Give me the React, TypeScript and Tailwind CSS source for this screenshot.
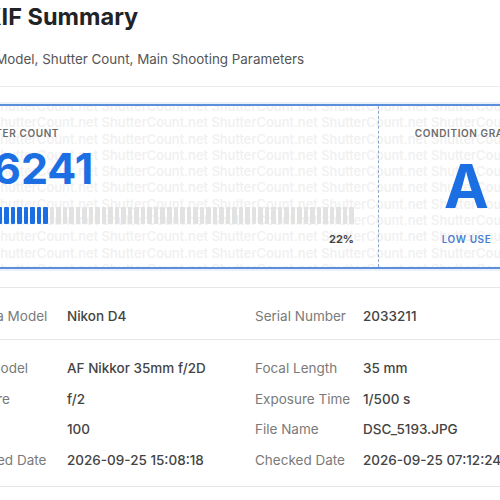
import React from "react";

const rows = [
  { label: "Lens Model", value: "AF Nikkor 35mm f/2D" },
  { label: "Focal Length", value: "35 mm" },
  { label: "Aperture", value: "f/2" },
  { label: "Exposure Time", value: "1/500 s" },
  { label: "ISO", value: "100" },
  { label: "File Name", value: "DSC_5193.JPG" },
  { label: "Captured Date", value: "2026-09-25 15:08:18" },
  { label: "Checked Date", value: "2026-09-25 07:12:24" },
];

function Watermark() {
  const line = Array.from({ length: 8 }, () => "ShutterCount.net").join(" ");
  return (
    <div className="pointer-events-none absolute inset-0 overflow-hidden select-none">
      <div className="-mt-[8px] flex flex-col">
        {Array.from({ length: 12 }).map((_, i) => (
          <div
            key={i}
            className="-ml-[62px] whitespace-nowrap text-[13px] leading-[16.3px] font-medium text-[#f0f0f0]"
          >
            {line}
          </div>
        ))}
      </div>
    </div>
  );
}

function Segments() {
  const total = 60;
  const filled = Math.round(total * 0.22);
  return (
    <div className="flex h-[17px] gap-[2px]">
      {Array.from({ length: total }).map((_, i) => (
        <div
          key={i}
          className={
            "flex-1 rounded-[1px] " + (i < filled ? "bg-[#1b6fe3]" : "bg-[#e2e2e2]")
          }
        />
      ))}
    </div>
  );
}

function Row({ label, value, left }: { label: string; value: string; left: boolean }) {
  return (
    <div className="flex text-[13.5px] leading-5">
      <div className={(left ? "w-[113px]" : "w-[108px]") + " shrink-0 text-[#7a7a7a]"}>{label}</div>
      <div className="font-medium text-[#444]">{value}</div>
    </div>
  );
}

export default function App() {
  return (
    <div
      className="h-[500px] w-[500px] overflow-hidden bg-white"
      style={{ fontFamily: "Inter, 'Noto Sans', sans-serif" }}
    >
      <div className="-ml-[58px] w-[614px] pt-px">
        <div className="flex items-center gap-2">
          <svg width="20" height="20" viewBox="0 0 24 24" fill="none" stroke="#1b6fe3" strokeWidth="2">
            <rect x="3" y="6" width="18" height="14" rx="2" />
            <circle cx="12" cy="13" r="4" />
          </svg>
          <h1 className="text-[23.5px] leading-8 font-bold text-[#222326]">EXIF Summary</h1>
        </div>
        <p className="mt-4 text-[13.4px] leading-5 text-[#555]">
          Camera Model, Shutter Count, Main Shooting Parameters
        </p>
        <div className="mt-[17px] h-px bg-[#ebebeb]" />

        <div className="relative mt-[17px] flex overflow-hidden rounded-lg border-2 border-[#5b8fd9] bg-white shadow-[0_0_0_2px_rgba(91,143,217,0.12)]">
          <Watermark />
          <div className="relative w-[434px] pl-[21px] pr-6 pt-[19px] pb-[20px]">
            <div className="text-[10px] leading-4 font-semibold tracking-[0.06em] text-[#6b6b6b]">
              SHUTTER COUNT
            </div>
            <div className="mt-[6px] text-[43px] leading-[43px] font-bold text-[#1b6fe3]">86241</div>
            <div className="mt-[17px]">
              <Segments />
            </div>
            <div className="mt-[7px] text-right text-[11px] leading-4 font-bold text-[#444]">22%</div>
          </div>
          <div className="relative flex flex-1 flex-col items-center border-l border-dashed border-[#8ea7c6] pt-[19px]">
            <div className="text-[10px] leading-4 font-semibold tracking-[0.06em] text-[#6b6b6b]">
              CONDITION GRADE
            </div>
            <div className="mt-[15px] text-[60px] leading-[60px] font-bold text-[#1b6fe3]">A</div>
            <div className="mt-[15px] text-[10px] leading-4 font-semibold tracking-[0.06em] text-[#4a7fcf]">
              LOW USE
            </div>
          </div>
        </div>

        <div className="mt-[18px] rounded-lg border border-[#e6e6e6] bg-white">
          <div className="grid grid-cols-[301px_1fr] pl-[11px] pr-4 pt-[18px] pb-[13px]">
            <Row label="Camera Model" value="Nikon D4" left />
            <Row label="Serial Number" value="2033211" left={false} />
          </div>
          <div className="h-px bg-[#e6e6e6]" />
          <div className="grid grid-cols-[301px_1fr] gap-y-[10.7px] pl-[11px] pr-4 pt-[18px] pb-[16px]">
            {rows.map((r, i) => (
              <Row key={r.label} label={r.label} value={r.value} left={i % 2 === 0} />
            ))}
          </div>
        </div>
      </div>
    </div>
  );
}
